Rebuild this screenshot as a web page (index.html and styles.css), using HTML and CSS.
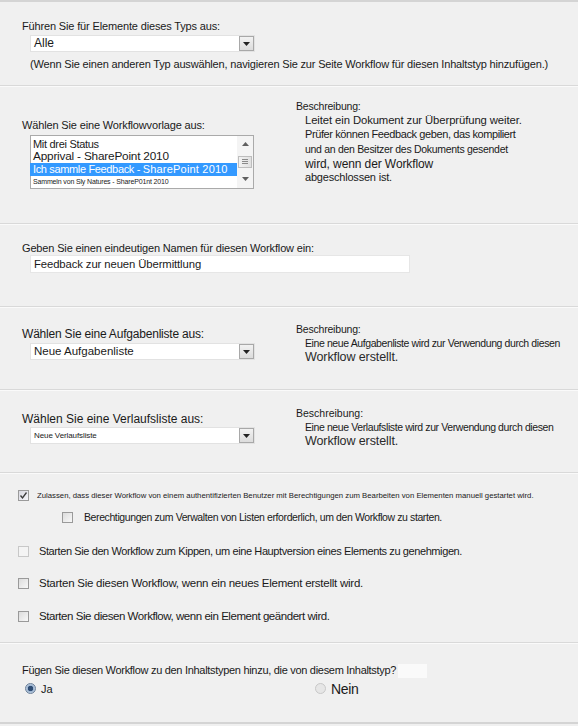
FILE: index.html
```html
<!DOCTYPE html>
<html lang="de">
<head>
<meta charset="utf-8">
<link rel="stylesheet" href="styles.css">
</head>
<body>
<div class="page">
  <section class="sec sec1">
    <div class="label">Führen Sie für Elemente dieses Typs aus:</div>
    <div class="select sel-type">
      <span class="sel-text">Alle</span>
      <span class="dd"><svg width="7" height="4" viewBox="0 0 7 4"><path d="M0 0H7L3.5 4Z" fill="#222"/></svg></span>
    </div>
    <div class="note">(Wenn Sie einen anderen Typ auswählen, navigieren Sie zur Seite Workflow für diesen Inhaltstyp hinzufügen.)</div>
  </section>

  <section class="sec sec2 cols">
    <div class="left">
      <div class="label">Wählen Sie eine Workflowvorlage aus:</div>
      <div class="listbox">
        <div class="items">
          <div class="item i1">Mit drei Status</div>
          <div class="item i2">Apprival - SharePoint 2010</div>
          <div class="item i3 selected">Ich sammle Feedback - <span class="sp">SharePoint 2010</span></div>
          <div class="item i4">Sammeln von Sly Natures - ShareP01nt 2010</div>
        </div>
        <div class="scrollbar">
          <span class="arrow up"><svg width="7" height="4" viewBox="0 0 7 4"><path d="M0 4H7L3.5 0Z" fill="#606060"/></svg></span>
          <span class="thumb"><i></i><i></i><i></i></span>
          <span class="arrow down"><svg width="7" height="4" viewBox="0 0 7 4"><path d="M0 0H7L3.5 4Z" fill="#606060"/></svg></span>
        </div>
      </div>
    </div>
    <div class="right">
      <div class="label dlabel">Beschreibung:</div>
      <div class="desc">
        <div class="d-big l1">Leitet ein Dokument zur Überprüfung weiter.</div>
        <div class="d-sm l2">Prüfer können Feedback geben, das kompiliert</div>
        <div class="d-sm l3">und an den Besitzer des Dokuments gesendet</div>
        <div class="d-big l4">wird, wenn der Workflow</div>
        <div class="d-sm l5">abgeschlossen ist.</div>
      </div>
    </div>
  </section>

  <section class="sec sec3">
    <div class="label">Geben Sie einen eindeutigen Namen für diesen Workflow ein:</div>
    <div class="input">Feedback zur neuen Übermittlung</div>
  </section>

  <section class="sec sec4 cols">
    <div class="left">
      <div class="label big">Wählen Sie eine Aufgabenliste aus:</div>
      <div class="select">
        <span class="sel-text">Neue Aufgabenliste</span>
        <span class="dd"><svg width="7" height="4" viewBox="0 0 7 4"><path d="M0 0H7L3.5 4Z" fill="#222"/></svg></span>
      </div>
    </div>
    <div class="right">
      <div class="label dlabel">Beschreibung:</div>
      <div class="desc">
        <div class="d-line">Eine neue Aufgabenliste wird zur Verwendung durch diesen</div>
        <div class="d-line2">Workflow erstellt.</div>
      </div>
    </div>
  </section>

  <section class="sec sec5 cols">
    <div class="left">
      <div class="label big">Wählen Sie eine Verlaufsliste aus:</div>
      <div class="select">
        <span class="sel-text tiny">Neue Verlaufsliste</span>
        <span class="dd"><svg width="7" height="4" viewBox="0 0 7 4"><path d="M0 0H7L3.5 4Z" fill="#222"/></svg></span>
      </div>
    </div>
    <div class="right">
      <div class="label dlabel">Beschreibung:</div>
      <div class="desc">
        <div class="d-line">Eine neue Verlaufsliste wird zur Verwendung durch diesen</div>
        <div class="d-line2">Workflow erstellt.</div>
      </div>
    </div>
  </section>

  <section class="sec sec6">
    <div class="cb-row r1">
      <span class="cb checked"><svg width="9" height="9" viewBox="0 0 9 9"><path d="M1.5 4.5L3.5 7L7.5 1.5" fill="none" stroke="#3a3a3a" stroke-width="1.3"/></svg></span>
      <span class="cb-text tiny">Zulassen, dass dieser Workflow von einem authentifizierten Benutzer mit Berechtigungen zum Bearbeiten von Elementen manuell gestartet wird.</span>
    </div>
    <div class="cb-row r2">
      <span class="cb"></span>
      <span class="cb-text">Berechtigungen zum Verwalten von Listen erforderlich, um den Workflow zu starten.</span>
    </div>
    <div class="cb-row r3">
      <span class="cb light"></span>
      <span class="cb-text">Starten Sie den Workflow zum Kippen, um eine Hauptversion eines Elements zu genehmigen.</span>
    </div>
    <div class="cb-row r4">
      <span class="cb"></span>
      <span class="cb-text">Starten Sie diesen Workflow, wenn ein neues Element erstellt wird.</span>
    </div>
    <div class="cb-row r5">
      <span class="cb"></span>
      <span class="cb-text">Starten Sie diesen Workflow, wenn ein Element geändert wird.</span>
    </div>
  </section>

  <section class="sec sec7">
    <div class="label q">Fügen Sie diesen Workflow zu den Inhaltstypen hinzu, die von diesem Inhaltstyp?<span class="blank"></span></div>
    <div class="radios">
      <div class="radio-item ja"><span class="rb on"></span><span class="rb-text">Ja</span></div>
      <div class="radio-item nein"><span class="rb"></span><span class="rb-text big">Nein</span></div>
    </div>
  </section>
</div>
</body>
</html>
```

FILE: styles.css
```css
* { box-sizing: border-box; }
html, body { margin: 0; padding: 0; background: #f0f0f0; }
body {
  font-family: "Liberation Sans", Arial, sans-serif;
  font-size: 11px;
  color: #1a1a1a;
  width: 578px;
  height: 726px;
  overflow: hidden;
}
.page {
  border-top: 2px solid #d4d4d4;
  border-bottom: 2px solid #d4d4d4;
}
.sec {
  border-bottom: 1px solid #d9d9d9;
  box-shadow: 0 1px 0 #fafafa;
}
.sec:last-child { border-bottom: none; box-shadow: none; }
.label { line-height: 15px; letter-spacing: -0.15px; white-space: nowrap; }
.label.big { font-size: 12px; letter-spacing: -0.2px; }

/* select box */
.select {
  display: flex;
  align-items: center;
  width: 225px;
  height: 17px;
  background: #fff;
  border: 1px solid #e2e2e2;
  margin-left: 8px;
}
.sel-text { flex: 1; padding-left: 3px; font-size: 11.5px; line-height: 15px; white-space: nowrap; }
.sel-type .sel-text { font-size: 12px; }
.sel-text.tiny { font-size: 8px; letter-spacing: -0.1px; }
.dd {
  width: 15px;
  height: 15px;
  border: 1px solid #a8a8a8;
  background: linear-gradient(#f2f2f2, #dcdcdc);
  display: flex;
  align-items: center;
  justify-content: center;
}

/* section 1 */
.sec1 { height: 84px; padding: 17px 0 0 22px; }
.sec1 .select { margin-top: 1px; }
.note { margin-left: 8px; margin-top: 5px; line-height: 15px; letter-spacing: -0.17px; white-space: nowrap; }

/* two-column sections */
.cols { display: grid; grid-template-columns: 296px 1fr; }
.left { padding-left: 22px; }
.desc { padding-left: 9px; white-space: nowrap; }
.dlabel { font-size: 10.5px; letter-spacing: -0.2px; line-height: 13px; }

.sec2 { height: 138px; }
.sec2 .left { padding-top: 32px; }
.sec2 .right { padding-top: 14px; }
.listbox {
  margin-left: 8px;
  margin-top: 2px;
  width: 224px;
  height: 54px;
  background: #fff;
  border: 1px solid #aaa;
  display: flex;
}
.items { flex: 1; padding-top: 2px; min-width: 0; }
.item { white-space: nowrap; padding-left: 2px; overflow: hidden; }
.i1 { font-size: 11px; line-height: 12px; letter-spacing: -0.3px; }
.i2 { font-size: 11.8px; line-height: 13px; letter-spacing: -0.2px; }
.i3 { font-size: 11px; line-height: 13px; letter-spacing: -0.35px; }
.i3.selected { background: #3399ff; color: #fff; margin-left: -1px; padding-left: 3px; width: 208px; }
.i3 .sp { font-size: 11px; letter-spacing: 0.2px; }
.i4 { font-size: 7px; line-height: 12px; letter-spacing: -0.15px; }
.scrollbar {
  width: 16px;
  display: flex;
  flex-direction: column;
  align-items: center;
  background: #f4f4f4;
  justify-content: space-between;
  padding: 3px 0 4px;
}
.arrow { display: flex; width: 14px; height: 10px; align-items: center; justify-content: center; }
.thumb {
  width: 14px; height: 12px;
  border: 1px solid #bdbdbd;
  background: linear-gradient(90deg, #f2f2f2, #e0e0e0);
  display: flex; flex-direction: column; align-items: center; justify-content: center; gap: 1px;
}
.thumb i { display: block; width: 6px; height: 1px; background: #8a8a8a; }

.l1 { font-size: 11.3px; line-height: 14px; letter-spacing: -0.1px; }
.l2 { font-size: 11px; line-height: 15px; letter-spacing: -0.4px; }
.l3 { font-size: 10.5px; line-height: 15px; letter-spacing: -0.3px; }
.l4 { font-size: 12px; line-height: 14px; letter-spacing: -0.1px; }
.l5 { font-size: 11px; line-height: 13px; letter-spacing: -0.2px; }
.d-line { font-size: 10.5px; line-height: 14px; letter-spacing: -0.4px; }
.d-line2 { font-size: 12.5px; line-height: 14px; letter-spacing: -0.1px; color: #2a2a2a; }

/* section 3 */
.sec3 { height: 83px; padding: 17px 0 0 22px; }
.sec3 .label { line-height: 14px; }
.input {
  margin-left: 8px;
  margin-top: 0;
  width: 380px;
  height: 18px;
  background: #fff;
  border: 1px solid #e6e6e6;
  padding-left: 3px;
  font-size: 11.3px;
  line-height: 16px;
  letter-spacing: -0.1px;
}

/* sections 4 & 5 */
.sec4, .sec5 { height: 83px; }
.sec4 .left { padding-top: 20px; }
.sec4 .right { padding-top: 16px; }
.sec4 .select { margin-top: 1px; }
.sec5 .left { padding-top: 22px; }
.sec5 .right { padding-top: 17px; }
.sec5 .label { letter-spacing: 0; }

/* section 6 checkboxes */
.sec6 { height: 170px; padding-top: 17px; }
.cb-row { display: flex; align-items: center; height: 11px; }
.cb {
  width: 11px; height: 11px;
  border: 1px solid #9a9a9a;
  background: linear-gradient(135deg, #dcdcdc, #f8f8f8);
  display: inline-flex; align-items: center; justify-content: center;
  flex: none;
}
.cb.light { border-color: #c8c8c8; background: #f4f4f4; }
.cb.checked { background: linear-gradient(135deg, #d8d8e0, #f5f5fa); }
.cb-text { line-height: 13px; white-space: nowrap; }
.cb-text.tiny { font-size: 7.75px; letter-spacing: 0; }
.r1 { padding-left: 18px; gap: 8px; }
.r2 { padding-left: 62px; gap: 11px; margin-top: 11px; }
.r2 .cb-text { font-size: 10.5px; letter-spacing: -0.4px; }
.r3 { padding-left: 18px; gap: 10px; margin-top: 23px; }
.r3 .cb-text { font-size: 11px; letter-spacing: -0.4px; }
.r4 { padding-left: 18px; gap: 10px; margin-top: 21px; }
.r4 .cb-text { font-size: 11.5px; letter-spacing: -0.25px; }
.r5 { padding-left: 18px; gap: 10px; margin-top: 22px; }
.r5 .cb-text { font-size: 11.5px; letter-spacing: -0.45px; }

/* section 7 */
.sec7 { height: 79px; padding: 20px 0 0 22px; }
.q { font-size: 11px; letter-spacing: -0.3px; display: flex; align-items: center; }
.blank { display: inline-block; width: 29px; height: 14px; background: #fafafa; margin-left: 2px; }
.radios { display: flex; margin-top: 4px; }
.radio-item { display: flex; align-items: center; gap: 5px; height: 13px; }
.ja { padding-left: 3px; width: 293px; }
.rb {
  width: 11px; height: 11px; border-radius: 50%;
  border: 1px solid #a0a0a0;
  background: radial-gradient(circle, #f4f4f4 40%, #d8d8d8);
  display: inline-block;
}
.rb.on { border-color: #6a7f99; background: radial-gradient(circle, #2e4c73 0 2.5px, #9bb3d0 3px, #dfe7f0); }
.nein .rb { border-color: #c8c8c8; background: #e6e6e6; }
.rb-text { font-size: 11px; }
.rb-text.big { font-size: 14px; letter-spacing: -0.3px; }
```
